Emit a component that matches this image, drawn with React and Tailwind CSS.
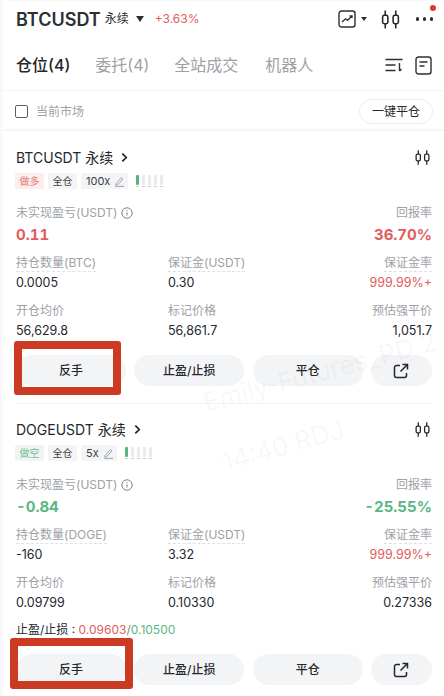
import React from 'react';

const font = { fontFamily: '"Inter", "Noto Sans CJK SC", sans-serif' };

function Candles({ size = 20, sw = 1.6 }) {
    return (
        <svg width={size} height={size} viewBox="0 0 20 20" fill="none" stroke="#23272e" strokeWidth={sw}>
            <rect x="2.5" y="6" width="5" height="8" rx="1.6" />
            <rect x="12.5" y="6" width="5" height="8" rx="1.6" />
            <path d="M5 1.5V6M5 14v4.5M15 1.5V6M15 14v4.5" />
        </svg>
    );
}

function Pencil() {
    return (
        <svg width="11" height="11" viewBox="0 0 12 12" fill="none" stroke="#8d9198" strokeWidth="0.9">
            <path d="M2 8.6 8 1.8l1.7 1.5-6 6.5H2z" />
            <path d="M1 11.3h10" />
        </svg>
    );
}

function Meter() {
    return (
        <div className="flex gap-[3px] ml-[4px] self-start mt-[2px]">
            {[0, 1, 2, 3, 4].map((i) => (
                <div key={i} className="flex flex-col gap-[1px]">
                    <div className={`w-[3px] h-[10px] rounded-[1px] ${i === 0 ? 'bg-[#58b57e]' : 'bg-[#e9eaec]'}`}></div>
                    <div className="w-[3px] h-[1px] bg-[#c9cbcf]"></div>
                </div>
            ))}
        </div>
    );
}

function Cell({ label, value, right, valueClass = 'text-[#23272e]', dashed }) {
    return (
        <div className={`flex flex-col ${right ? 'items-end' : 'items-start'}`}>
            <span className={`text-[12px] text-[#9da1a7] ${dashed ? 'leading-[17px] h-[18px] border-b border-dashed border-[#dfe0e2]' : 'leading-[18px]'}`}>{label}</span>
            <span className={`text-[12.5px] leading-[18px] mt-[2px] ${valueClass}`}>{value}</span>
        </div>
    );
}

function ActionBtn({ children }) {
    return (
        <button className="h-[31px] rounded-full bg-[#f3f4f5] text-[12px] font-medium text-[#23272e] flex items-center justify-center">
            {children}
        </button>
    );
}

function PositionCard({ p }) {
    const pnlColor = p.up ? 'text-[#e25c5c]' : 'text-[#5ab783]';
    return (
        <div>
            <div className="flex items-center justify-between h-[20px]">
                <div className="flex items-center text-[14px] text-[#23272e]">
                    <span>{p.symbol} 永续</span>
                    <svg className="ml-[8px]" width="7" height="11" viewBox="0 0 8 12" fill="none" stroke="#23272e" strokeWidth="2">
                        <path d="M1.5 1.5 6 6l-4.5 4.5" />
                    </svg>
                </div>
                <span className="flex mr-[1px]"><Candles size={17} sw={1.5} /></span>
            </div>
            <div className="flex items-center mt-[6px] h-[16px] gap-[4px] -ml-[1px] text-[10px]">
                <span className={`h-[16px] w-[29px] rounded-[2px] flex items-center justify-center ${p.up ? 'bg-[#fdeeee] text-[#e57a7a]' : 'bg-[#f2f4f4] text-[#6fc193]'}`}>{p.side}</span>
                <span className="h-[16px] w-[29px] rounded-[2px] flex items-center justify-center bg-[#f3f4f5] text-[#3b3f46]">全仓</span>
                <span className="h-[16px] pl-[5px] pr-[3px] rounded-[2px] flex items-center gap-[4px] bg-[#f3f4f5] text-[11px] text-[#3b3f46]">{p.lev}<Pencil /></span>
                <Meter />
            </div>
            <div className="flex justify-between mt-[15px]">
                <div className="flex flex-col">
                    <span className="flex items-center gap-[4px] text-[12px] leading-[18px] text-[#9da1a7]">
                        未实现盈亏(USDT)
                        <svg width="12" height="12" viewBox="0 0 12 12" fill="none" stroke="#7f838a" strokeWidth="1">
                            <circle cx="6" cy="6" r="5.2" />
                            <path d="M6 5.2v3.4M6 3.2v1" />
                        </svg>
                    </span>
                    <span className={`text-[15px] leading-[20px] mt-[3px] font-bold tabular-nums ${pnlColor}`}>{p.pnl}</span>
                </div>
                <div className="flex flex-col items-end">
                    <span className="text-[12px] leading-[18px] text-[#9da1a7]">回报率</span>
                    <span className={`text-[15px] leading-[20px] mt-[3px] font-bold tabular-nums ${pnlColor}`}>{p.roe}</span>
                </div>
            </div>
            <div className="grid grid-cols-[152px_1fr_auto] gap-y-[10px] mt-[9px]">
                <Cell label={p.sizeLabel} value={p.size} dashed />
                <Cell label="保证金(USDT)" value={p.margin} dashed />
                <Cell label="保证金率" value="999.99%+" right dashed valueClass="text-[#e25c5c]" />
                <Cell label="开仓均价" value={p.entry} />
                <Cell label="标记价格" value={p.mark} />
                <Cell label="预估强平价" value={p.liq} right />
            </div>
            {p.tp && (
                <div className="text-[12px] leading-[16px] mt-[10px] text-[#23272e]">
                    止盈/止损 : <span className="text-[#e25c5c]">{p.tp}</span><span className="text-[#7f838a]">/</span><span className="text-[#5ab783]">{p.sl}</span>
                </div>
            )}
            <div className={`grid grid-cols-[110px_110px_110px_61px] gap-x-[8.33px] ${p.tp ? 'mt-[16px]' : 'mt-[15px]'}`}>
                <ActionBtn>反手</ActionBtn>
                <ActionBtn>止盈/止损</ActionBtn>
                <ActionBtn>平仓</ActionBtn>
                <ActionBtn>
                    <svg width="16" height="16" viewBox="0 0 16 16" fill="none" stroke="#23272e" strokeWidth="1.5">
                        <path d="M7 2.5H3.5a2 2 0 0 0-2 2v8a2 2 0 0 0 2 2h8a2 2 0 0 0 2-2V10" />
                        <path d="M9.5 1.5h5v5M14.5 1.5 7.5 8.5" />
                    </svg>
                </ActionBtn>
            </div>
        </div>
    );
}

const positions = [
    { symbol: 'BTCUSDT', up: true, side: '做多', lev: '100x', pnl: '0.11', roe: '36.70%', sizeLabel: '持仓数量(BTC)', size: '0.0005', margin: '0.30', entry: '56,629.8', mark: '56,861.7', liq: '1,051.7' },
    { symbol: 'DOGEUSDT', up: false, side: '做空', lev: '5x', pnl: '-0.84', roe: '-25.55%', sizeLabel: '持仓数量(DOGE)', size: '-160', margin: '3.32', entry: '0.09799', mark: '0.10330', liq: '0.27336', tp: '0.09603', sl: '0.10500' },
];

export default function App() {
    return (
        <div className="relative w-[444px] h-[696px] overflow-hidden bg-white border-l-[3px] border-t border-[#f9f9f9]" style={font}>
            <div className="flex items-center h-[36px] pl-[13px] pr-[11px]">
                <span className="text-[18px] font-semibold text-[#2b2f36]">BTCUSDT</span>
                <span className="text-[12px] text-[#2b2f36] ml-[4px]">永续</span>
                <span className="ml-[7px] w-0 h-0 border-l-[4px] border-r-[4px] border-t-[6px] border-l-transparent border-r-transparent border-t-[#2b2f36]"></span>
                <span className="ml-[11px] text-[12px] text-[#e25c5c]">+3.63%</span>
                <div className="ml-auto flex items-center relative">
                    <svg width="18" height="18" viewBox="0 0 18 18" fill="none" stroke="#2b2f36" strokeWidth="1.4">
                        <rect x="1" y="1" width="16" height="16" rx="2.5" />
                        <path d="M4 12 7.5 8.8l2 1.6L13.5 6.5M11.5 6h2.5v2" />
                    </svg>
                    <span className="ml-[5px] w-0 h-0 border-l-[3px] border-r-[3px] border-t-[4px] border-l-transparent border-r-transparent border-t-[#2b2f36]"></span>
                    <span className="ml-[13px] flex"><Candles size={21} sw={1.5} /></span>
                    <span className="ml-[15px] flex gap-[3.5px]">
                        <i className="block w-[3.5px] h-[3.5px] rounded-full bg-[#2b2f36]"></i>
                        <i className="block w-[3.5px] h-[3.5px] rounded-full bg-[#2b2f36]"></i>
                        <i className="block w-[3.5px] h-[3.5px] rounded-full bg-[#2b2f36]"></i>
                    </span>
                    <span className="absolute right-[-3px] top-[-4px] w-[6px] h-[6px] rounded-full bg-[#db3a2c]"></span>
                </div>
            </div>
            <div className="flex items-center h-[54px] pt-[3px] pl-[13px] pr-[12px] border-b border-[#f3f3f4] text-[16px] text-[#9da1a7]">
                <span className="font-medium text-[#23272e]">仓位(4)</span>
                <span className="ml-[25px]">委托(4)</span>
                <span className="ml-[25px]">全站成交</span>
                <span className="ml-[27px]">机器人</span>
                <div className="ml-auto flex items-center gap-[12px]">
                    <svg width="18" height="14" viewBox="0 0 18 14" fill="none" stroke="#2b2f36" strokeWidth="1.4">
                        <path d="M0.5 1.5h17M0.5 7h10M0.5 12.5h10M14.5 5v8M14.5 13l2-2" />
                    </svg>
                    <svg width="17" height="19" viewBox="0 0 17 19" fill="none" stroke="#2b2f36" strokeWidth="1.4">
                        <rect x="1" y="1" width="15" height="17" rx="2.5" />
                        <path d="M4.5 6h8M4.5 10h5" />
                    </svg>
                </div>
            </div>
            <div className="flex items-center justify-between h-[40px] pt-[3px] pl-[12px] pr-[11px] border-b-2 border-[#f6f6f7]">
                <div className="flex items-center gap-[8px]">
                    <span className="w-[13px] h-[13px] rounded-[2px] border border-[#5c6066]"></span>
                    <span className="text-[12px] text-[#9da1a7]">当前市场</span>
                </div>
                <button className="w-[74px] h-[25px] rounded-full border border-[#eceded] text-[12px] text-[#23272e]">一键平仓</button>
            </div>
            <div className="ml-[13px] mr-[12px] pt-[16px] pb-[17px] border-b border-[#f3f3f4]">
                <PositionCard p={positions[0]} />
            </div>
            <div className="ml-[13px] mr-[12px] pt-[15px]">
                <PositionCard p={positions[1]} />
            </div>

            {/* watermark */}
            <div className="absolute left-[197px] top-[351px] -rotate-[15deg] text-[26px] text-[#000000]/[0.04] whitespace-nowrap pointer-events-none">Emily-Futures_PD 2</div>
            <div className="absolute left-[217px] top-[425px] -rotate-[16deg] text-[26px] text-[#000000]/[0.04] whitespace-nowrap pointer-events-none">14:40 RDJ</div>

            {/* annotation boxes */}
            <div className="absolute left-[11px] top-[340px] w-[107px] h-[54px] border-[8px] border-[#cb3a22] rounded-[3px] pointer-events-none"></div>
            <div className="absolute left-[7px] top-[637px] w-[123px] h-[51px] border-[8px] border-[#cb3a22] rounded-[3px] pointer-events-none"></div>
        </div>
    );
}
